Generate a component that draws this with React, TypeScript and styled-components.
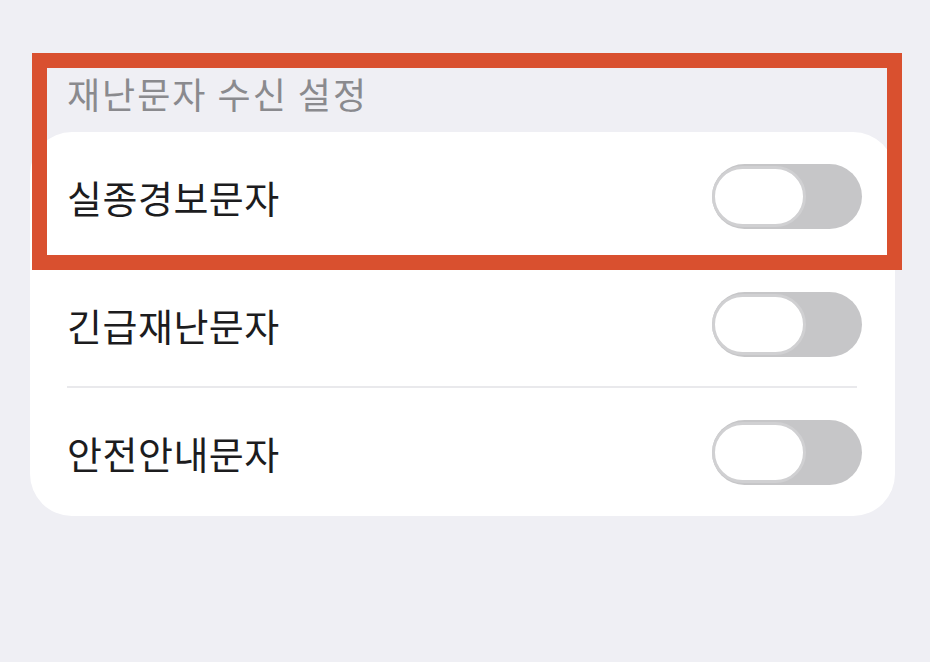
import styled, { createGlobalStyle } from "styled-components";

const GlobalStyle = createGlobalStyle`
  html, body {
    margin: 0;
    padding: 0;
    background: #efeff4;
  }
  body {
    font-family: "Noto Sans CJK KR", "Noto Sans", sans-serif;
  }
`;

// 전체 화면
const Screen = styled.div`
  position: relative;
  width: 930px;
  height: 662px;
  box-sizing: border-box;
  padding: 72px 35px 0 30px;
  background: #efeff4;
`;

// 섹션 제목
const SectionTitle = styled.div`
  padding-left: 37px;
  height: 42px;
  line-height: 42px;
  font-size: 36px;
  color: #8a8a8e;
  letter-spacing: 2px;
  margin-bottom: 18px;
`;

// 흰색 카드
const Card = styled.div`
  background: #ffffff;
  border-radius: 42px;
  overflow: hidden;
`;

const Row = styled.div<{ $divider?: boolean }>`
  position: relative;
  height: 128px;
  display: flex;
  align-items: center;
  justify-content: space-between;
  padding: 0 33px 0 37px;
  &::after {
    content: "";
    display: ${(p) => (p.$divider ? "block" : "none")};
    position: absolute;
    left: 37px;
    right: 38px;
    bottom: 0;
    height: 2px;
    background: #e9e9ec;
  }
`;

const Label = styled.span`
  font-size: 38px;
  color: #1c1c1e;
  letter-spacing: 0.5px;
`;

// iOS 스타일 스위치 (꺼짐)
const Toggle = styled.div`
  position: relative;
  width: 150px;
  height: 65px;
  border-radius: 33px;
  background: #c6c6c8;
  flex-shrink: 0;
`;

const Knob = styled.div`
  position: absolute;
  left: 0;
  top: 2px;
  width: 94px;
  height: 61px;
  box-sizing: border-box;
  border-radius: 31px;
  background: #ffffff;
  border: 3px solid #d0d0d2;
`;

// 강조 표시 빨간 박스
const Highlight = styled.div`
  position: absolute;
  left: 32px;
  top: 53px;
  width: 870px;
  height: 217px;
  box-sizing: border-box;
  border: 15px solid #d9502f;
  pointer-events: none;
`;

const items = ["실종경보문자", "긴급재난문자", "안전안내문자"];

const App = () => {
  return (
    <>
      <GlobalStyle />
      <Screen>
        <SectionTitle>재난문자 수신 설정</SectionTitle>
        <Card>
          {items.map((label, i) => (
            <Row key={label} $divider={i < items.length - 1}>
              <Label>{label}</Label>
              <Toggle>
                <Knob />
              </Toggle>
            </Row>
          ))}
        </Card>
        <Highlight />
      </Screen>
    </>
  );
};

export default App;
